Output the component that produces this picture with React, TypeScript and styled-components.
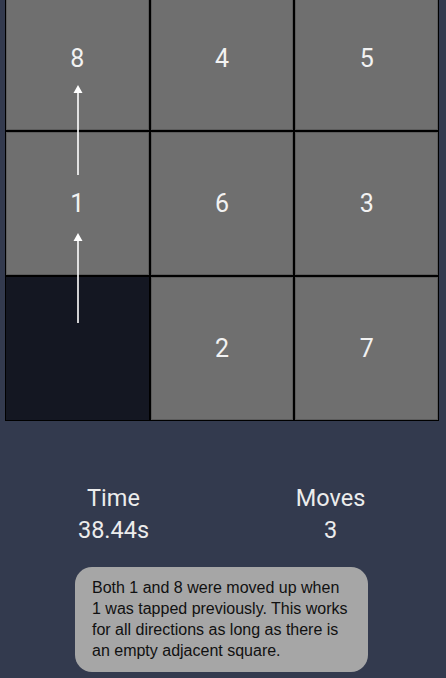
import React from "react";
import styled, { createGlobalStyle } from "styled-components";

const Global = createGlobalStyle`
  html, body { margin: 0; padding: 0; background: #333a4e; overflow: hidden; }
  body { width: 446px; height: 678px; }
`;

const Page = styled.div`
  display: flex;
  flex-direction: column;
  width: 446px;
  height: 678px;
  overflow: hidden;
  background: #333a4e;
`;

const Board = styled.div`
  position: relative;
  margin: -14px 7px 0 5px;
  width: 434px;
  padding: 1px;
  box-sizing: border-box;
  background: #000;
  display: grid;
  grid-template-columns: repeat(3, 1fr);
  grid-auto-rows: 143px;
  gap: 2px;
`;

const Tile = styled.div<{ $empty?: boolean }>`
  display: flex;
  align-items: center;
  justify-content: center;
  box-sizing: border-box;
  background: ${(p) => (p.$empty ? "#141722" : "#6f6f6f")};
  border: 1px solid ${(p) => (p.$empty ? "#141722" : "#5c5c5c")};
  color: #f2f2f2;
  font-family: Roboto, "Noto Sans", sans-serif;
  font-size: 25px;
`;

const Arrow = styled.svg<{ $top: number }>`
  position: absolute;
  left: 68px;
  top: ${(p) => p.$top}px;
  width: 10px;
  height: 91px;
  overflow: visible;
`;

const Stats = styled.div`
  display: grid;
  grid-template-columns: 1fr 1fr;
  width: 434px;
  margin: 61px 0 0 5px;
`;

const Stat = styled.div`
  display: flex;
  flex-direction: column;
  align-items: center;
  color: #ececec;
  font-family: Roboto, "Noto Sans", sans-serif;
  font-size: 23.5px;
  line-height: 32px;
`;

const Callout = styled.div`
  margin: 21px 0 0 75px;
  width: 293px;
  height: 105px;
  box-sizing: border-box;
  padding: 10px 8px 0 17px;
  background: #a6a6a6;
  border-radius: 17px;
  color: #111;
  font-family: "Liberation Sans", Arial, sans-serif;
  font-size: 16px;
  line-height: 21px;
  white-space: nowrap;
`;

const Line = styled.div``;

const tiles: (number | null)[] = [8, 4, 5, 1, 6, 3, null, 2, 7];

const UpArrow = ({ top }: { top: number }) => (
  <Arrow $top={top} viewBox="0 0 10 91">
    <polygon points="5,0 0.5,8 9.5,8" fill="#fff" />
    <line x1="5" y1="7" x2="5" y2="90" stroke="#fff" strokeWidth="1.6" />
  </Arrow>
);

export default function App() {
  return (
    <>
      <Global />
      <Page>
        <Board>
          {tiles.map((t, i) => (
            <Tile key={i} $empty={t === null}>
              {t}
            </Tile>
          ))}
          <UpArrow top={99} />
          <UpArrow top={247} />
        </Board>
        <Stats>
          <Stat>
            <span>Time</span>
            <span>38.44s</span>
          </Stat>
          <Stat>
            <span>Moves</span>
            <span>3</span>
          </Stat>
        </Stats>
        <Callout>
          <Line>Both 1 and 8 were moved up when</Line>
          <Line>1 was tapped previously. This works</Line>
          <Line>for all directions as long as there is</Line>
          <Line>an empty adjacent square.</Line>
        </Callout>
      </Page>
    </>
  );
}
